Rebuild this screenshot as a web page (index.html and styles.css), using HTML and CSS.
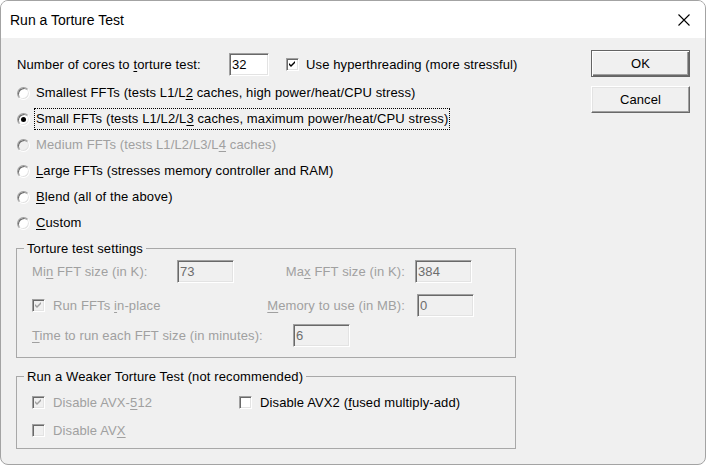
FILE: index.html
```html
<!DOCTYPE html>
<html>
<head>
<meta charset="utf-8">
<title>Run a Torture Test</title>
<link rel="stylesheet" href="styles.css">
</head>
<body>
<div class="window">
  <div class="titlebar">
    <span class="title">Run a Torture Test</span>
    <svg class="close" viewBox="0 0 12 12"><path d="M0.5 0.5 L11.5 11.5 M11.5 0.5 L0.5 11.5" stroke="#000" stroke-width="1.1" fill="none"/></svg>
  </div>
  <div class="client">
    <div class="main">
      <div class="row cores">
        <span class="lbl-cores">Number of cores to <u>t</u>orture test:</span>
        <span class="edit w40">32</span>
        <span class="cb cb-ht"><svg viewBox="0 0 11 11"><polygon points="2,4 4,6 8,2 8,4 4,8 2,6" fill="#000"/></svg></span>
        <span class="cb-label">Use hyperthreading (more stressful)</span>
      </div>
      <div class="radios">
        <div class="radio-row"><span class="radio"></span><span class="r-label">Smallest FFTs (tests L1/L<u>2</u> caches, high power/heat/CPU stress)</span></div>
        <div class="radio-row"><span class="radio on"></span><span class="r-label focus">Small FFTs (tests L1/L2/L<u>3</u> caches, maximum power/heat/CPU stress)</span></div>
        <div class="radio-row dis"><span class="radio"></span><span class="r-label">Medium FFTs (tests L1/L2/L3/L<u>4</u> caches)</span></div>
        <div class="radio-row"><span class="radio"></span><span class="r-label"><u>L</u>arge FFTs (stresses memory controller and RAM)</span></div>
        <div class="radio-row"><span class="radio"></span><span class="r-label"><u>B</u>lend (all of the above)</span></div>
        <div class="radio-row"><span class="radio"></span><span class="r-label"><u>C</u>ustom</span></div>
      </div>
      <fieldset class="group g1">
        <legend>Torture test settings</legend>
        <div class="grow r1">
          <span class="glabel w145">Mi<u>n</u> FFT size (in K):</span>
          <span class="edit dis w57">73</span>
          <span class="glabel right w171">Ma<u>x</u> FFT size (in K):</span>
          <span class="edit dis w57 ml10">384</span>
        </div>
        <div class="grow r2">
          <span class="gitem w200"><span class="cb dis"><svg viewBox="0 0 11 11"><polygon points="2,4 4,6 8,2 8,4 4,8 2,6" fill="#a0a0a0"/></svg></span><span class="glabel ml8">Run FFTs <u>i</u>n-place</span></span>
          <span class="glabel right w173"><u>M</u>emory to use (in MB):</span>
          <span class="edit dis w57 ml12">0</span>
        </div>
        <div class="grow r3">
          <span class="glabel w261"><u>T</u>ime to run each FFT size (in minutes):</span>
          <span class="edit dis w57">6</span>
        </div>
      </fieldset>
      <fieldset class="group g2">
        <legend>Run a Weaker Torture Test (not recommended)</legend>
        <div class="grow s1">
          <span class="gitem w207"><span class="cb dis"><svg viewBox="0 0 11 11"><polygon points="2,4 4,6 8,2 8,4 4,8 2,6" fill="#a0a0a0"/></svg></span><span class="glabel ml8">Disable AVX-<u>5</u>12</span></span>
          <span class="gitem"><span class="cb"></span><span class="ml8">Disable AVX2 (<u>f</u>used multiply-add)</span></span>
        </div>
        <div class="grow s2">
          <span class="gitem"><span class="cb dis"></span><span class="glabel ml8">Disable AV<u>X</u></span></span>
        </div>
      </fieldset>
    </div>
    <div class="side">
      <button class="btn default">OK</button>
      <button class="btn">Cancel</button>
    </div>
  </div>
</div>
</body>
</html>
```
FILE: styles.css
```css
* { box-sizing: border-box; }
html, body { margin: 0; padding: 0; background: #fff; }
body {
  font-family: "Liberation Sans", Arial, sans-serif;
  font-size: 13px;
  letter-spacing: 0.12px;
  color: #000;
}
u { text-decoration: underline; text-underline-offset: 2px; }

.window {
  width: 706px;
  height: 465px;
  border: 1px solid #a3a3a3;
  border-radius: 8px;
  overflow: hidden;
  background: #f0f0f0;
  display: flex;
  flex-direction: column;
}
.titlebar {
  height: 37px;
  flex: none;
  background: #fff;
  display: flex;
  align-items: center;
  justify-content: space-between;
  padding: 0 15px 0 9px;
}
.title { font-size: 14px; letter-spacing: 0; }
.close { width: 12px; height: 12px; display: block; }

.client { display: flex; flex: 1; }
.main { width: 590px; flex: none; padding: 15px 0 0 15px; }
.side {
  display: flex;
  flex-direction: column;
  gap: 9px;
  padding-top: 12px;
}
.btn {
  width: 99px;
  height: 27px;
  padding: 0;
  font: inherit;
  letter-spacing: inherit;
  color: #000;
  background: #f0f0f0;
  border: 1px solid;
  border-color: #fff #696969 #696969 #fff;
  box-shadow: inset -1px -1px 0 #a0a0a0, inset 1px 1px 0 #e3e3e3;
}
.btn.default {
  border-color: #646464;
  box-shadow: inset 1px 1px 0 #fff, inset -1px -1px 0 #696969, inset -2px -2px 0 #a0a0a0;
}

.row { display: flex; align-items: center; }
.cores { height: 23px; margin-left: 1px; }
.lbl-cores { width: 212px; flex: none; }
.w40 { width: 40px; }
.cb-ht { margin-left: 17px; }
.cb-label { margin-left: 7px; }

.edit {
  display: flex;
  align-items: center;
  height: 23px;
  flex: none;
  padding-left: 2px;
  background: #fff;
  border: 1px solid;
  border-color: #a0a0a0 #fff #fff #a0a0a0;
  box-shadow: inset 1px 1px 0 #696969, inset -1px -1px 0 #e3e3e3;
}
.edit.dis { background: #f0f0f0; color: #6d6d6d; }

.cb {
  width: 13px;
  height: 13px;
  flex: none;
  background: #fff;
  border: 1px solid;
  border-color: #a0a0a0 #fff #fff #a0a0a0;
  box-shadow: inset 1px 1px 0 #696969, inset -1px -1px 0 #e3e3e3;
}
.cb svg { display: block; width: 11px; height: 11px; }
.cb.dis { background: #f0f0f0; }

.radios { margin-top: 4px; }
.radio-row {
  height: 26px;
  display: flex;
  align-items: center;
  padding-left: 1px;
}
.radio {
  width: 13px;
  height: 13px;
  flex: none;
  border-radius: 50%;
  background: #fff;
  border: 1px solid;
  border-color: #a0a0a0 #fff #fff #a0a0a0;
  box-shadow: inset 1px 1px 0 #696969, inset -1px -1px 0 #e3e3e3;
  display: flex;
  align-items: center;
  justify-content: center;
}
.radio.on::after {
  content: "";
  width: 5px;
  height: 5px;
  border-radius: 50%;
  background: #000;
}
.r-label { margin-left: 6px; line-height: 16px; }
.r-label.focus {
  margin-left: 4px;
  padding: 2px 1px;
  border: 1px dotted #000;
}
.radio-row.dis { color: #a0a0a0; }
.radio-row.dis .radio { background: #f0f0f0; }

.group {
  margin: 0;
  padding: 0 0 10px 0;
  width: 500px;
  min-width: 0;
  border: 1px solid #a8a8a8;
}
.group legend {
  margin-left: 7px;
  padding: 0 3px;
  line-height: 15px;
  color: #000;
}
.g1 { margin-top: 5px; }
.g2 { margin-top: 11px; padding-bottom: 9px; }

.grow { display: flex; align-items: center; padding-left: 15px; }
.r1 { height: 23px; margin-top: 4px; }
.r2 { height: 23px; margin-top: 11px; }
.r3 { height: 23px; margin-top: 7px; }
.s1 { height: 17px; margin-top: 10px; }
.s2 { height: 17px; margin-top: 11px; }

.glabel { color: #a0a0a0; flex: none; }
.gitem { display: flex; align-items: center; flex: none; }
.right { text-align: right; }
.w145 { width: 145px; }
.w171 { width: 171px; }
.w173 { width: 173px; }
.w200 { width: 200px; }
.w207 { width: 207px; }
.w261 { width: 261px; }
.w57 { width: 57px; }
.ml8 { margin-left: 8px; }
.ml10 { margin-left: 10px; }
.ml12 { margin-left: 12px; }
```
